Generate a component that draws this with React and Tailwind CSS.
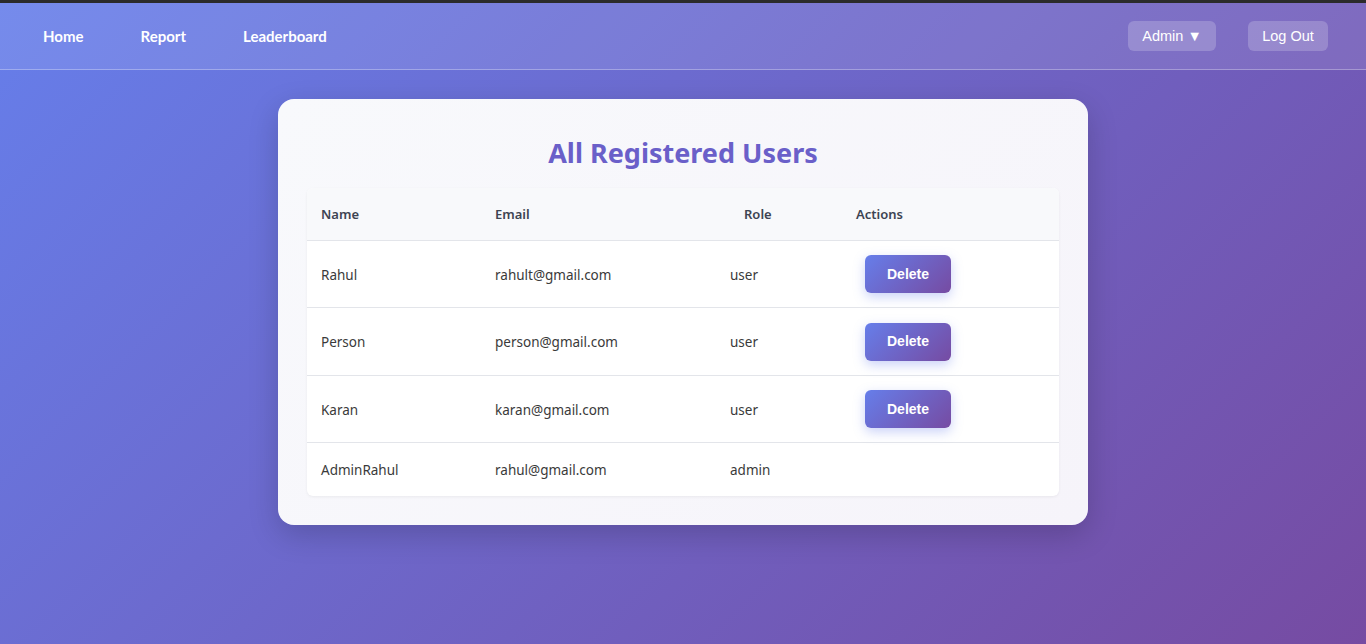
import React from 'react';

const users = [
    { name: 'Rahul', email: 'rahult@gmail.com', role: 'user', h: 'h-[67px]' },
    { name: 'Person', email: 'person@gmail.com', role: 'user', h: 'h-[68px]' },
    { name: 'Karan', email: 'karan@gmail.com', role: 'user', h: 'h-[67px]' },
    { name: 'AdminRahul', email: 'rahul@gmail.com', role: 'admin', h: 'h-[53px]' },
];

const App = () => {
    return (
        <div className="min-h-screen bg-[linear-gradient(135deg,#667eea_0%,#764ba2_100%)] font-['Noto_Sans',sans-serif] border-t-[3px] border-[#2b2b2b]">
            {/* Navbar */}
            <nav className="h-[67px] flex items-center justify-between bg-white/10 border-b border-white/30 pl-[43px] pr-[38px]">
                <div className="flex items-center gap-[57px] font-['Lato',sans-serif] text-[15px] font-bold text-white">
                    <a href="#">Home</a>
                    <a href="#">Report</a>
                    <a href="#">Leaderboard</a>
                </div>
                <div className="flex items-center gap-[32px] font-['Liberation_Sans',Arial,sans-serif] text-[14.5px] text-white">
                    <button className="h-[30px] w-[88px] rounded-[6px] bg-white/20 pt-[2px]">Admin ▼</button>
                    <button className="h-[30px] w-[80px] rounded-[6px] bg-white/20 pt-[2px]">Log Out</button>
                </div>
            </nav>

            {/* Card */}
            <div className="flex justify-center pt-[29px]">
                <div className="w-[810px] rounded-[16px] bg-[linear-gradient(135deg,#f8f9fc,#f6f4fa)] shadow-[0_10px_30px_rgba(0,0,0,0.18)] px-[29px] pt-[32px] pb-[29px]">
                    <h2 className="text-center text-[27px] font-bold leading-[44px] text-[#6a5fc9] mb-[13px]">All Registered Users</h2>

                    <div className="rounded-[6px] bg-white shadow-[0_1px_3px_rgba(0,0,0,0.06)] overflow-hidden">
                        <div className="grid grid-cols-[174px_249px_112px_1fr] h-[53px] items-center bg-[#f8f9fb] border-b border-[#e3e5ea] text-[13px] font-semibold text-[#3d4452] pt-[2px]">
                            <div className="pl-[14px]">Name</div>
                            <div className="pl-[14px]">Email</div>
                            <div className="pl-[14px]">Role</div>
                            <div className="pl-[14px]">Actions</div>
                        </div>
                        {users.map((u, i) => (
                            <div
                                key={u.email}
                                className={`grid grid-cols-[174px_235px_135px_1fr] items-center text-[13.5px] text-[#3a3a3a] ${u.h} ${i < users.length - 1 ? 'border-b border-[#e3e5ea]' : ''}`}
                            >
                                <div className="pl-[14px] pt-[2px]">{u.name}</div>
                                <div className="pl-[14px] pt-[2px]">{u.email}</div>
                                <div className="pl-[14px] pt-[2px]">{u.role}</div>
                                <div className="pl-[14px]">
                                    {u.role !== 'admin' && (
                                        <button className="h-[38px] w-[86px] rounded-[6px] bg-[linear-gradient(135deg,#667eea,#764ba2)] font-['Liberation_Sans',Arial,sans-serif] text-[14px] font-bold text-white shadow-[0_4px_12px_rgba(102,126,234,0.35)]">
                                            Delete
                                        </button>
                                    )}
                                </div>
                            </div>
                        ))}
                    </div>
                </div>
            </div>
        </div>
    );
};

export default App;
